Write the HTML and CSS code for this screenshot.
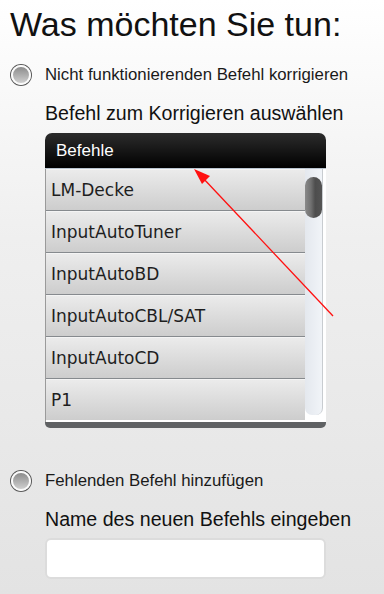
FILE: index.html
```html
<!DOCTYPE html>
<html lang="de">
<head>
    <meta charset="UTF-8">
    <meta name="viewport" content="width=device-width, initial-scale=1.0">
    <title>Was möchten Sie tun</title>
    <link rel="stylesheet" href="styles.css">
</head>
<body>

    <div class="page">
        <h1>Was möchten Sie tun:</h1>

        <!-- Fix a command that does not work -->
        <div class="option">
            <span class="radio"></span>
            <span class="option-label">Nicht funktionierenden Befehl korrigieren</span>
        </div>
        <div class="section">
            <h2>Befehl zum Korrigieren auswählen</h2>
            <div class="list-box">
                <div class="list-header">Befehle</div>
                <div class="list-body">
                    <ul class="rows">
                        <li>LM-Decke</li>
                        <li>InputAutoTuner</li>
                        <li>InputAutoBD</li>
                        <li>InputAutoCBL/SAT</li>
                        <li>InputAutoCD</li>
                        <li class="last">P1</li>
                    </ul>
                    <div class="track">
                        <div class="thumb"></div>
                    </div>
                </div>
            </div>
        </div>

        <!-- Add a missing command -->
        <div class="option option-second">
            <span class="radio"></span>
            <span class="option-label">Fehlenden Befehl hinzufügen</span>
        </div>
        <div class="section">
            <h2>Name des neuen Befehls eingeben</h2>
            <input class="name-input" type="text">
        </div>
    </div>

    <!-- red annotation arrow -->
    <svg class="arrow" width="384" height="594" viewBox="0 0 384 594">
        <line x1="333" y1="316" x2="202" y2="177" stroke="#ff1010" stroke-width="1.3"/>
        <polygon points="194,169 210,176 202,184" fill="#ff1010"/>
    </svg>

</body>
</html>
```

FILE: styles.css
```css
body {
    margin: 0;
    padding: 0;
    font-family: "Liberation Sans", Arial, sans-serif;
    color: #111;
    background: linear-gradient(to bottom, #ffffff 0%, #efefef 40%, #e3e3e3 100%);
    min-height: 594px;
    position: relative;
}

.page {
    padding: 0 0 0 10px;
}

h1 {
    margin: 0;
    padding-top: 5px;
    font-size: 34px;
    font-weight: normal;
    line-height: 38px;
}

.option {
    display: flex;
    align-items: center;
    margin-top: 21px;
    height: 22px;
}

.option-second {
    margin-top: 42px;
}

.radio {
    width: 16px;
    height: 16px;
    border-radius: 50%;
    border: 2px solid #fafafa;
    box-shadow: 0 0 0 1px #5a5a5a;
    background: linear-gradient(to bottom, #8c8c8c, #cfcfcf);
    margin-left: 1px;
}

.option-label {
    margin-left: 14px;
    font-size: 16.8px;
    color: #1a1a1a;
}

.section {
    padding-left: 35px;
}

h2 {
    margin: 0;
    padding-top: 15px;
    font-size: 19.6px;
    font-weight: normal;
    line-height: 24px;
}

.list-box {
    width: 281px;
    margin-top: 8px;
    border-radius: 7px 7px 5px 5px;
    background: #ffffff;
    border-bottom: 6px solid #5f6163;
    overflow: hidden;
}

.list-header {
    height: 35px;
    line-height: 35px;
    padding-left: 11px;
    font-size: 17px;
    color: #fff;
    background: linear-gradient(to bottom, #2c2c2c, #000000);
    border-bottom: 1px solid #b9c4cf;
}

.list-body {
    display: flex;
    border-left: 1px solid #9a9a9a;
    height: 253px;
}

.rows {
    flex: 1;
    margin: 0;
    padding: 0;
    list-style: none;
}

.rows li {
    height: 40px;
    line-height: 40px;
    padding-left: 5px;
    font-family: "DejaVu Sans", Verdana, sans-serif;
    font-size: 17px;
    color: #1e1e1e;
    background: linear-gradient(to bottom, #ebebeb, #cdcdcd);
    border-top: 1px solid #f4f4f4;
    border-bottom: 1px solid #868a8e;
}

.rows li.last {
    border-bottom: none;
}

.track {
    width: 17px;
    margin: 0 3px 7px 0;
    border-radius: 0 0 7px 7px;
    background: linear-gradient(to right, #e4e8ee, #f1f4f8);
    padding-top: 8px;
    border-right: 1px solid #c8ccd0;
}

.thumb {
    width: 17px;
    height: 41px;
    border-radius: 9px;
    background: linear-gradient(to right, #8a8a8a 0%, #707070 35%, #4d4d4d 60%, #545454 100%);
}

.name-input {
    display: block;
    box-sizing: border-box;
    width: 281px;
    height: 41px;
    margin-top: 7px;
    border: 2px solid #dcdcdc;
    border-radius: 6px;
    background: #ffffff;
}

.arrow {
    position: absolute;
    left: 0;
    top: 0;
    pointer-events: none;
}
```
